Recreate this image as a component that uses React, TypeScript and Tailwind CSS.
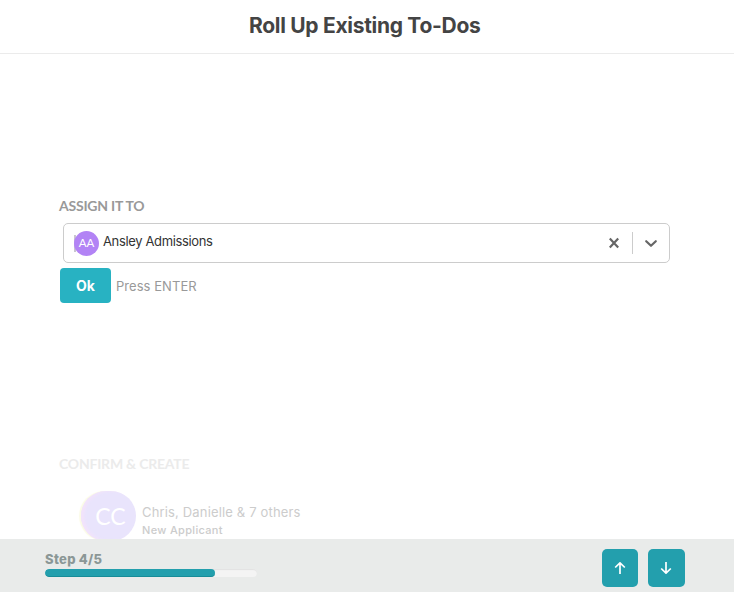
function Header() {
  return (
    <header className="h-[54px] shrink-0 border-b border-[#ebebeb] pl-[249px] pt-[10px]">
      <h1 className="whitespace-nowrap text-[21px] font-bold leading-8 tracking-[-0.3px] text-[#444]">
        Roll Up Existing To-Dos
      </h1>
    </header>
  );
}

function AssigneeSelect() {
  return (
    <div className="ml-[4px] mt-[7px] flex h-[40px] w-[607px] items-center rounded-[5px] border border-[#ccc] pl-[10px]">
      <div className="h-[17px] w-[2px] shrink-0 bg-[#c9c6cf]" />
      <div className="-ml-[2px] flex h-[25px] w-[25px] shrink-0 items-center justify-center rounded-full bg-[#b283f5] font-['Lato',sans-serif] text-[11.5px] text-white">
        AA
      </div>
      <span className="-mt-[4px] ml-[4px] flex-1 whitespace-nowrap text-[13px] leading-5 tracking-[-0.36px] text-[#333]">
        Ansley Admissions
      </span>
      <svg className="mr-[12px] h-[12px] w-[12px]" viewBox="0 0 12 12" fill="none" stroke="#666" strokeWidth="2.2">
        <path d="M1.8 1.6l8.4 8.8M10.2 1.6L1.8 10.4" />
      </svg>
      <div className="h-[22px] w-px bg-[#ccc]" />
      <svg className="ml-[11px] mr-[11px] h-[14px] w-[14px]" viewBox="0 0 14 14" fill="none" stroke="#666" strokeWidth="2.2" strokeLinecap="round" strokeLinejoin="round">
        <path d="M2.2 5.2L7 9.8l4.8-4.6" />
      </svg>
    </div>
  );
}

function ArrowButton({ down = false }: { down?: boolean }) {
  return (
    <button
      aria-label={down ? "Next step" : "Previous step"}
      className={`flex h-[38px] items-center justify-center rounded-[5px] bg-[#239fad] ${down ? "w-[37px] pr-px" : "w-[36px]"}`}
    >
      <svg
        className={`h-[14px] w-[12px] ${down ? "rotate-180" : ""}`}
        viewBox="0 0 12 14"
        fill="none"
        stroke="white"
        strokeWidth="1.7"
        strokeLinejoin="round"
      >
        <path d="M6 13V2M1.2 6.5L6 1.8l4.8 4.7" />
      </svg>
    </button>
  );
}

export default function App() {
  return (
    <div className="flex h-[592px] w-[734px] flex-col overflow-hidden bg-white font-['Inter',sans-serif]">
      <Header />
      <main className="h-[485px] shrink-0 overflow-hidden pl-[59px] pt-[142px]">
        <section className="h-[258px]">
          <h2 className="whitespace-nowrap font-['Lato',sans-serif] text-[14px] font-bold leading-5 tracking-[-0.22px] text-[#999]">
            ASSIGN IT TO
          </h2>
          <AssigneeSelect />
          <div className="ml-px mt-[5px] flex h-[35px] items-center">
            <button className="h-[35px] w-[51px] rounded-[4px] bg-[#28b2c2] text-[14px] font-bold text-white">
              Ok
            </button>
            <span className="ml-[5px] mt-[2px] whitespace-nowrap text-[13px] tracking-[0.05px] text-[#999]">Press ENTER</span>
          </div>
        </section>
        <section>
          <h2 className="whitespace-nowrap font-['Lato',sans-serif] text-[14px] font-bold leading-5 tracking-[-0.22px] text-[#ebebeb]">
            CONFIRM &amp; CREATE
          </h2>
          <div className="ml-[22px] mt-[17px] flex">
            <div className="flex h-[50px] w-[55px] shrink-0 items-center justify-center rounded-[25px] bg-[#e9e4fc] pl-[4px] font-['Lato',sans-serif] text-[23px] text-white shadow-[-2px_0_1px_#fbfbe6,inset_3px_0_3px_#f3e3fb]">
              CC
            </div>
            <div className="ml-[6px] pt-[11px] text-[#ccc]">
              <p className="whitespace-nowrap text-[13px] leading-5 tracking-[0.16px]">Chris, Danielle &amp; 7 others</p>
              <p className="whitespace-nowrap text-[11px] font-medium leading-4 tracking-[0.32px]">New Applicant</p>
            </div>
          </div>
        </section>
      </main>
      <footer className="flex h-[53px] shrink-0 justify-between bg-[#e9ebea] pl-[45px] pr-[49px] pt-[10px]">
        <div>
          <p className="whitespace-nowrap text-[13px] font-extrabold leading-5 tracking-[0.3px] text-[#8b9796]">Step 4/5</p>
          <div className="h-[8px] w-[212px] overflow-hidden rounded-[4px] bg-[#f4f4f4] shadow-[inset_0_1px_1px_#e2e2e2]">
            <div className="h-full w-4/5 rounded-[4px] border-b border-[#178c98] bg-[#239fad]" />
          </div>
        </div>
        <div className="flex gap-[10px]">
          <ArrowButton />
          <ArrowButton down />
        </div>
      </footer>
    </div>
  );
}
